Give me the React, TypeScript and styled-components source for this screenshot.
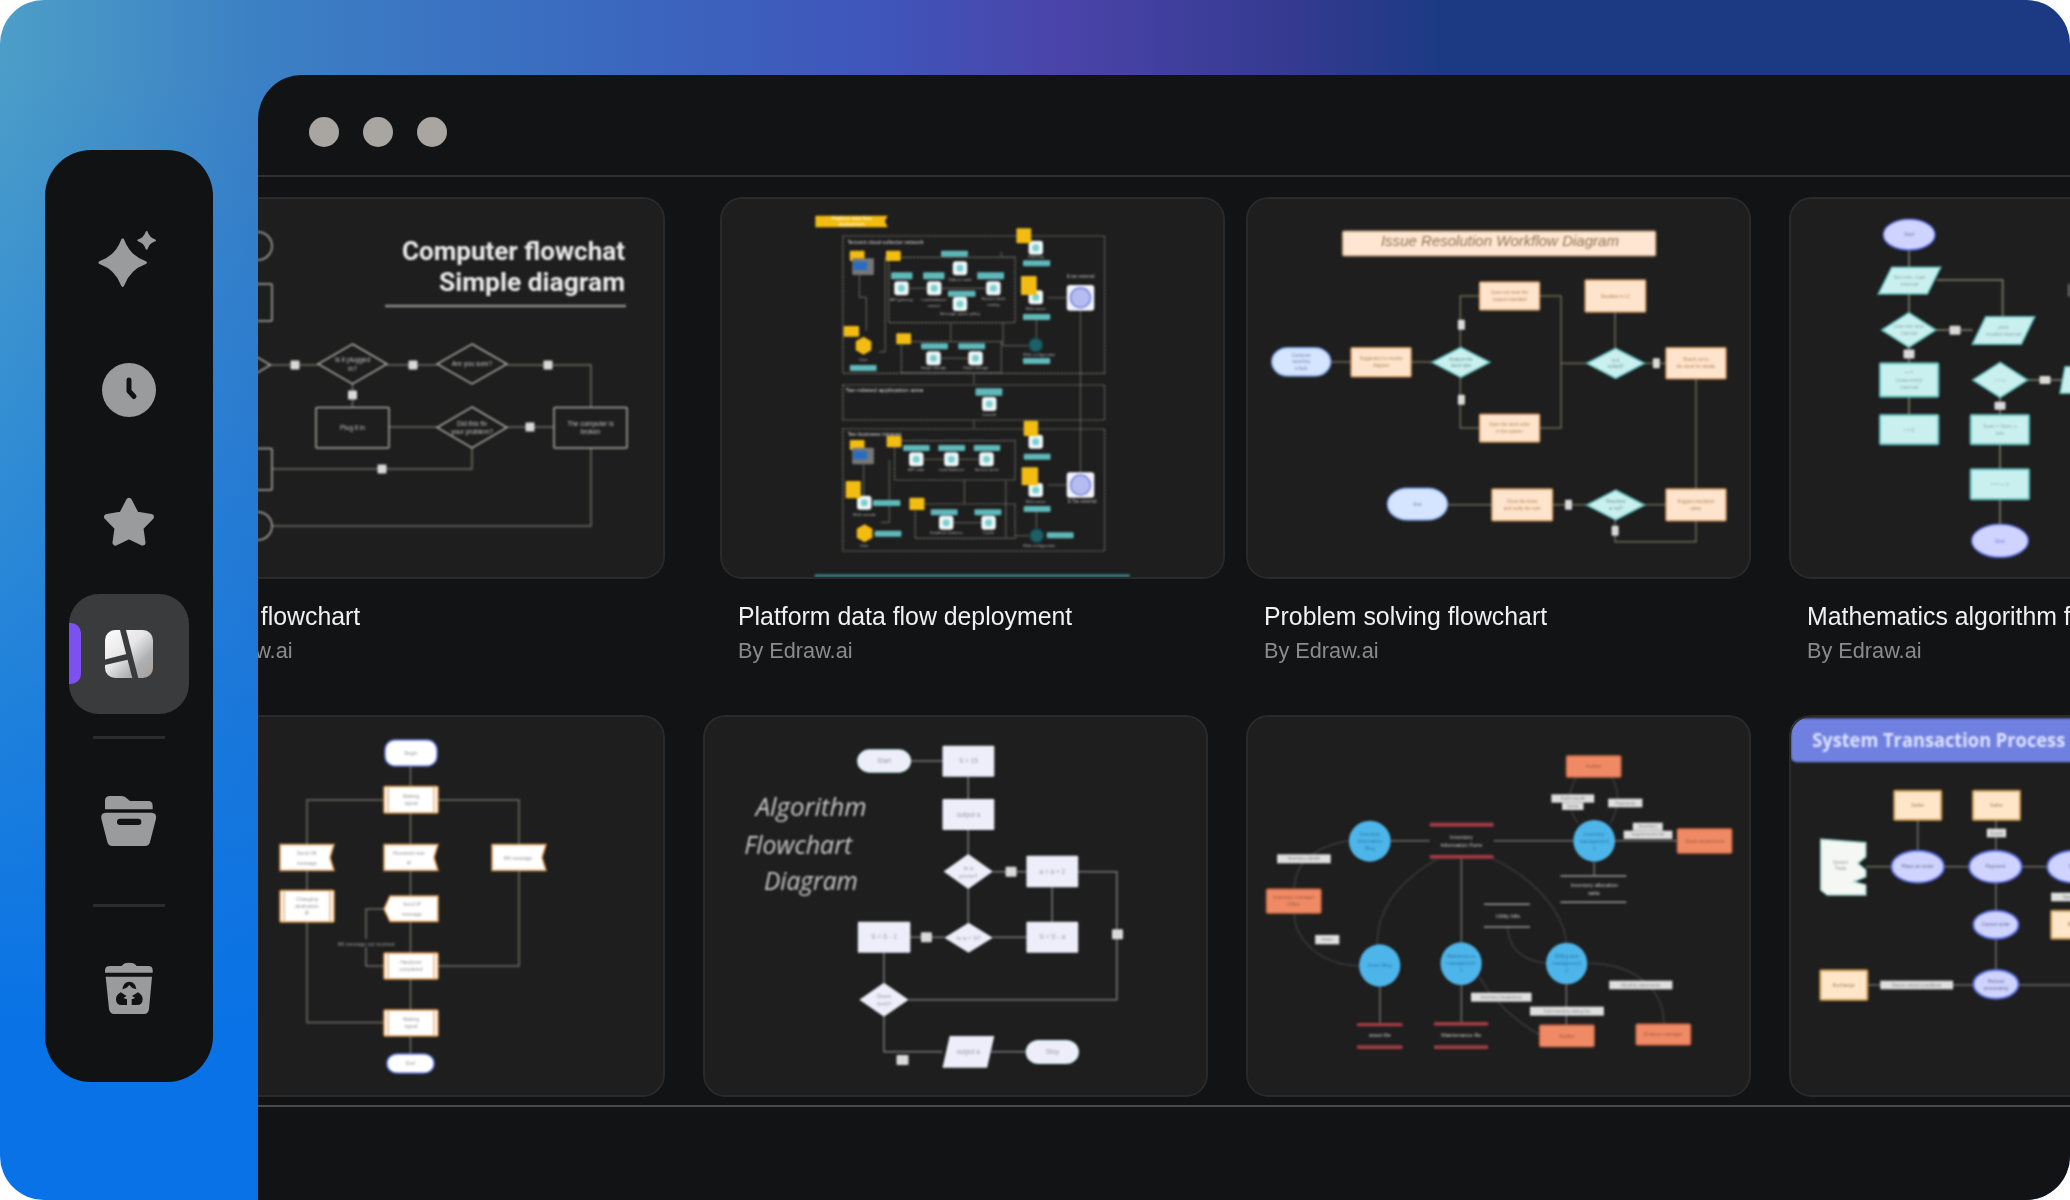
import React from "react";
import styled, { createGlobalStyle } from "styled-components";

const GlobalStyle = createGlobalStyle`
  html, body { margin: 0; padding: 0; background: #fff; }
  body { font-family: "Liberation Sans", Arial, sans-serif; }
`;

/* ---------- page frame ---------- */

const Frame = styled.div`
  width: 2070px;
  height: 1200px;
  display: flex;
  align-items: flex-start;
  gap: 45px;
  padding-left: 45px;
  box-sizing: border-box;
  border-radius: 44px;
  overflow: hidden;
  background:
    linear-gradient(180deg, rgba(8, 114, 230, 0) 70px, rgba(8, 114, 230, 1) 1040px),
    linear-gradient(90deg, #4c9ec8 0, #3c80c4 260px, #3a6cc0 560px, #3f55ba 880px, #4a44aa 1060px, #353a90 1290px, #1c3a84 1440px, #1c3a84 100%);
`;

const Sidebar = styled.nav`
  flex: 0 0 168px;
  margin-top: 150px;
  padding: 48px 24px 32px;
  box-sizing: border-box;
  display: flex;
  flex-direction: column;
  gap: 12px;
  border-radius: 46px;
  background: #111214;
`;

const NavItem = styled.div<{ $active?: boolean }>`
  position: relative;
  height: 120px;
  display: flex;
  align-items: center;
  justify-content: center;
  border-radius: 30px;
  overflow: hidden;
  background: ${(p) => (p.$active ? "#3a3b3d" : "transparent")};
`;

const ActiveMark = styled.span`
  position: absolute;
  left: 0;
  top: 29px;
  width: 12px;
  height: 61px;
  border-radius: 0 10px 10px 0;
  background: #7d50f2;
`;

const NavRule = styled.div`
  height: 3px;
  margin: 10px 24px 11px;
  background: #2b2c2d;
`;

const Window = styled.main`
  flex: 1;
  min-width: 0;
  height: 1125px;
  margin-top: 75px;
  display: flex;
  flex-direction: column;
  border-radius: 44px 0 0 0;
  overflow: hidden;
  background: #121314;
`;

const TitleBar = styled.header`
  flex: 0 0 102px;
  box-sizing: border-box;
  display: flex;
  align-items: center;
  gap: 24px;
  padding: 0 0 0 51px;
  border-bottom: 2px solid #2f3030;
`;

const Dot = styled.span`
  width: 30px;
  height: 30px;
  margin-top: 14px;
  border-radius: 50%;
  background: #a9a5a1;
`;

const Gallery = styled.section`
  flex: 1;
  min-height: 0;
  padding-top: 20px;
  overflow: hidden;
`;

const Row = styled.div`
  display: flex;
  height: 518px;
  margin-left: -98px;
`;

const Footer = styled.footer`
  flex: 0 0 95px;
  box-sizing: border-box;
  border-top: 2px solid #4b4b49;
`;

const Column = styled.article<{ $gap?: number; $inset?: number }>`
  flex: 0 0 505px;
  margin-left: ${(p) => p.$gap ?? 0}px;
  --inset: ${(p) => p.$inset ?? 18}px;
`;

const Thumb = styled.div`
  position: relative;
  height: 382px;
  border-radius: 22px;
  overflow: hidden;
  background: #1e1e1e;
  &::after {
    content: "";
    position: absolute;
    inset: 0;
    border-radius: 22px;
    border: 2px solid #2a2a2a;
    pointer-events: none;
  }
`;

const SketchSvg = styled.svg`
  display: block;
  filter: blur(0.85px);
`;

const CardTitle = styled.h3`
  margin: 24px 0 0;
  padding-left: var(--inset);
  font: 400 24.85px/28px "Liberation Sans", Arial, sans-serif;
  color: #f1f1f1;
  white-space: nowrap;
  filter: blur(0.3px);
`;

const CardBy = styled.p`
  margin: 8px 0 0;
  padding-left: var(--inset);
  font: 400 21.7px/24px "Liberation Sans", Arial, sans-serif;
  color: #8b8b8b;
  white-space: nowrap;
  filter: blur(0.3px);
`;

/* ---------- sidebar icons ---------- */

const ICON = "#9a9b9d";
const HOLE = "#111214";

const IconSvg = styled.svg`
  display: block;
  width: 100px;
  height: 100px;
`;

const SparkleIcon = () => (
  <IconSvg viewBox="-3 -36 300 300">
    <path
      d="M128 60Q146 110 196 128Q146 146 128 196Q110 146 60 128Q110 110 128 60Z"
      fill={ICON}
      stroke={ICON}
      strokeWidth="9"
      strokeLinejoin="round"
    />
    <path
      d="M200 36Q206 55 225 61Q206 67 200 86Q194 67 175 61Q194 55 200 36Z"
      fill={ICON}
      stroke={ICON}
      strokeWidth="6"
      strokeLinejoin="round"
    />
  </IconSvg>
);

const ClockIcon = () => (
  <svg width="54" height="54" viewBox="0 0 54 54">
    <circle cx="27" cy="27" r="27" fill={ICON} />
    <path d="M27 17V28L32 33.5" fill="none" stroke={HOLE} strokeWidth="5" strokeLinecap="round" strokeLinejoin="round" />
  </svg>
);

const StarIcon = () => (
  <svg width="60" height="60" viewBox="0 0 60 60">
    <path
      d="M30 9L37 22.5L51.9 24.9L41.4 35.7L43.5 50.6L30 44L16.5 50.6L18.6 35.7L8.1 24.9L23 22.5Z"
      fill={ICON}
      stroke={ICON}
      strokeWidth="6"
      strokeLinejoin="round"
    />
  </svg>
);

const LogoIcon = () => (
  <svg width="48" height="48" viewBox="0 0 48 48">
    <defs>
      <linearGradient id="logoFill" x1="0" y1="0" x2="1" y2="1">
        <stop offset="0" stopColor="#ffffff" />
        <stop offset="0.45" stopColor="#e6e4e4" />
        <stop offset="0.72" stopColor="#adb0b2" />
        <stop offset="1" stopColor="#a89e98" />
      </linearGradient>
    </defs>
    <rect width="48" height="48" rx="10" fill="url(#logoFill)" />
    <path d="M15 0H21L33.3 48H27.3Z" fill="#3a3b3d" />
    <path d="M0 29.4L24.5 23.3L26 29L0 35Z" fill="#3a3b3d" />
  </svg>
);

const FolderIcon = () => (
  <IconSvg viewBox="-3 -24 300 300">
    <path d="M75 88V62Q75 48 90 48H125Q135 48 142 56L150 63H205Q218 63 218 78V88Z" fill={ICON} />
    <path d="M78 98H214Q231 98 228 116L210 186Q207 198 195 198H97Q85 198 82 186L64 116Q61 98 78 98Z" fill={ICON} />
    <rect x="111" y="116" width="73" height="19" rx="9" fill={HOLE} />
  </IconSvg>
);

const BinIcon = () => (
  <IconSvg viewBox="-3 -15 300 300">
    <path d="M90 63H125Q130 53 147 53Q165 53 170 63H205Q218 63 218 76V83H75V76Q75 63 90 63Z" fill={ICON} />
    <path d="M77 95H216L207 192Q205 207 192 207H102Q90 207 87 192Z" fill={ICON} />
    <path d="M127 133Q130 110 148 110Q166 110 169 133L157 129L148 120L139 129Z" fill={HOLE} />
    <path d="M122 142L140 153L130 159L141 163V180H125Q108 180 108 162Q108 150 122 142Z" fill={HOLE} />
    <path d="M174 142L156 153L166 159L155 163V180H171Q188 180 188 162Q188 150 174 142Z" fill={HOLE} />
  </IconSvg>
);

/* ---------- thumbnails: shapes are noted in the crop's units and mapped to the page ---------- */

type Box = [number, number, number, number];
type Map = { ox: number; oy: number; sx: number; sy: number };

type Shape =
  | { kind: "box" | "oval" | "diamond"; b: Box; fill: string; stroke?: string; sw?: number; rx?: number; dash?: string; text?: string[]; size?: number; color?: string }
  | { kind: "para"; b: Box; skew: number; fill: string; stroke?: string; text?: string[]; size?: number; color?: string }
  | { kind: "poly"; pts: number[]; fill: string; stroke?: string }
  | { kind: "line"; pts: number[]; stroke?: string; sw?: number; dash?: string }
  | { kind: "curve"; pts: number[]; stroke?: string; sw?: number }
  | { kind: "hexa"; x: number; y: number; r: number; fill: string }
  | { kind: "circle"; x: number; y: number; r: number; fill: string; stroke?: string; sw?: number }
  | { kind: "text"; x: number; y: number; t: string; size?: number; color?: string; anchor?: "start" | "middle" | "end"; family?: string; weight?: number; italic?: boolean; fit?: number };

const LINE = "#6c6c66";

const renderShape = (s: Shape, i: number, m: Map) => {
  const X = (v: number) => m.ox + v / m.sx;
  const Y = (v: number) => m.oy + v / m.sy;
  const label = (cx: number, cy: number, lines?: string[], size = 6, color = "#777") =>
    lines?.map((line, n) => (
      <text
        key={n}
        x={cx}
        y={cy + (n - (lines.length - 1) / 2) * (size + 2) + size * 0.35}
        fontSize={size}
        fill={color}
        textAnchor="middle"
        fontFamily="Liberation Sans, sans-serif"
      >
        {line}
      </text>
    ));

  switch (s.kind) {
    case "box":
    case "oval":
    case "diamond": {
      const [x1, y1, x2, y2] = [X(s.b[0]), Y(s.b[1]), X(s.b[2]), Y(s.b[3])];
      const cx = (x1 + x2) / 2;
      const cy = (y1 + y2) / 2;
      const common = { fill: s.fill, stroke: s.stroke, strokeWidth: s.sw ?? 1.5 };
      return (
        <g key={i}>
          {s.kind === "box" && <rect x={x1} y={y1} width={x2 - x1} height={y2 - y1} rx={s.rx ?? 1} strokeDasharray={s.dash} {...common} />}
          {s.kind === "oval" && <ellipse cx={cx} cy={cy} rx={(x2 - x1) / 2} ry={(y2 - y1) / 2} {...common} />}
          {s.kind === "diamond" && <polygon points={`${cx},${y1} ${x2},${cy} ${cx},${y2} ${x1},${cy}`} {...common} />}
          {label(cx, cy, s.text, s.size, s.color)}
        </g>
      );
    }
    case "para": {
      const [x1, y1, x2, y2] = [X(s.b[0]), Y(s.b[1]), X(s.b[2]), Y(s.b[3])];
      const k = s.skew / m.sx;
      return (
        <g key={i}>
          <polygon points={`${x1 + k},${y1} ${x2},${y1} ${x2 - k},${y2} ${x1},${y2}`} fill={s.fill} stroke={s.stroke} strokeWidth="1.5" />
          {label((x1 + x2) / 2, (y1 + y2) / 2, s.text, s.size, s.color)}
        </g>
      );
    }
    case "poly": {
      const pts = s.pts.reduce<string[]>((acc, v, n) => (n % 2 ? acc : [...acc, `${X(v)},${Y(s.pts[n + 1])}`]), []);
      return <polygon key={i} points={pts.join(" ")} fill={s.fill} stroke={s.stroke} strokeWidth="1.5" />;
    }
    case "line": {
      const pts = s.pts.reduce<string[]>((acc, v, n) => (n % 2 ? acc : [...acc, `${X(v)},${Y(s.pts[n + 1])}`]), []);
      return <polyline key={i} points={pts.join(" ")} fill="none" stroke={s.stroke ?? LINE} strokeWidth={s.sw ?? 1.5} strokeDasharray={s.dash} />;
    }
    case "curve": {
      const p = s.pts;
      const d = `M${X(p[0])} ${Y(p[1])}C${X(p[2])} ${Y(p[3])} ${X(p[4])} ${Y(p[5])} ${X(p[6])} ${Y(p[7])}`;
      return <path key={i} d={d} fill="none" stroke={s.stroke ?? "#3c3c3c"} strokeWidth={s.sw ?? 1.5} />;
    }
    case "hexa": {
      const cx = X(s.x);
      const cy = Y(s.y);
      const r = s.r;
      const pts = [0, 1, 2, 3, 4, 5].map((n) => {
        const a = (Math.PI / 3) * n - Math.PI / 2;
        return `${cx + r * Math.cos(a)},${cy + r * Math.sin(a)}`;
      });
      return <polygon key={i} points={pts.join(" ")} fill={s.fill} />;
    }
    case "circle":
      return <circle key={i} cx={X(s.x)} cy={Y(s.y)} r={s.r} fill={s.fill} stroke={s.stroke} strokeWidth={s.sw ?? 1.5} />;
    case "text":
      return (
        <text
          key={i}
          x={X(s.x)}
          y={Y(s.y)}
          fontSize={s.size ?? 6}
          fill={s.color ?? "#c8c8c8"}
          textAnchor={s.anchor ?? "middle"}
          fontFamily={s.family ?? "Liberation Sans, sans-serif"}
          fontWeight={s.weight ?? 400}
          fontStyle={s.italic ? "italic" : "normal"}
          textLength={s.fit}
          lengthAdjust={s.fit ? "spacingAndGlyphs" : undefined}
        >
          {s.t}
        </text>
      );
  }
};

// draws in page coordinates, the viewBox is the card's place on the page
const Sketch: React.FC<{ left: number; top: number; map: Map; shapes: Shape[] }> = ({ left, top, map, shapes }) => (
  <SketchSvg width="505" height="382" viewBox={`${left} ${top} 505 382`}>
    {shapes.map((s, i) => renderShape(s, i, map))}
  </SketchSvg>
);

const box = (b: Box, fill: string, stroke?: string, text?: string[], extra?: object): Shape => ({ kind: "box", b, fill, stroke, text, ...extra });
const oval = (b: Box, fill: string, stroke?: string, text?: string[], extra?: object): Shape => ({ kind: "oval", b, fill, stroke, text, ...extra });
const diamond = (b: Box, fill: string, stroke?: string, text?: string[], extra?: object): Shape => ({ kind: "diamond", b, fill, stroke, text, ...extra });
const line = (...pts: number[]): Shape => ({ kind: "line", pts });
const curve = (...pts: number[]): Shape => ({ kind: "curve", pts });
const chip = (x: number, y: number, w: number, h: number, ratioX = 1, ratioY = 1): Shape => ({
  kind: "box",
  b: [x - (w / 2) * ratioX, y - (h / 2) * ratioY, x + (w / 2) * ratioX, y + (h / 2) * ratioY],
  fill: "#d9d9d9",
});

/* Computer flowchart, page coordinates */
const PAGE: Map = { ox: 0, oy: 0, sx: 1, sy: 1 };
const OUTLINE = { fill: "none", stroke: "#a9a9a4", color: "#c4c4c4", sw: 1.5 };
const outlined = (k: "box" | "oval" | "diamond", b: Box, text?: string[]): Shape => ({ kind: k, b, text, size: 6.5, ...OUTLINE });

const computerChart: Shape[] = [
  { kind: "text", x: 625, y: 260, t: "Computer flowchat", size: 25, color: "#ececec", anchor: "end", family: "Roboto, sans-serif", weight: 700, fit: 223 },
  { kind: "text", x: 625, y: 291, t: "Simple diagram", size: 25, color: "#ececec", anchor: "end", family: "Roboto, sans-serif", weight: 700, fit: 186 },
  { kind: "line", pts: [385, 306, 626, 306], stroke: "#8d8d88", sw: 2.5 },
  line(270, 365, 318, 365),
  line(387, 365, 437, 365),
  line(507, 365, 591, 365, 591, 407),
  line(352.5, 384, 352.5, 407),
  line(389, 427, 437, 427),
  line(507, 427, 554, 427),
  line(472, 448, 472, 469, 272, 469),
  line(272, 526, 591, 526, 591, 448),
  outlined("oval", [244, 232, 272, 260]),
  outlined("box", [200, 284, 272, 321]),
  outlined("diamond", [200, 344, 270.5, 386]),
  outlined("diamond", [318, 344, 387, 384], ["Is it plugged", "in?"]),
  outlined("diamond", [437, 344, 507, 384], ["Are you sure?"]),
  outlined("diamond", [437, 407, 507, 448], ["Did this fix", "your problem?"]),
  outlined("box", [316, 407.5, 389, 448], ["Plug it in"]),
  outlined("box", [554, 407.5, 627, 448], ["The computer is", "broken"]),
  outlined("box", [200, 448.5, 272, 490]),
  outlined("oval", [244, 512, 272, 540]),
  chip(295, 365, 9, 9),
  chip(413, 365, 9, 9),
  chip(548, 365, 9, 9),
  chip(352.5, 395, 9, 9),
  chip(530, 427, 9, 9),
  chip(382, 469, 9, 9),
];

/* Platform data flow deployment, crop units */
const YELLOW = "#f2bc12";
const TEAL = "#5fb9ba";
const SQUARE = "#eef7f7";

const tealChips: Box[] = [
  [700, 212, 778, 230], [555, 277, 617, 298], [648, 277, 710, 298], [805, 277, 883, 298], [720, 332, 800, 350],
  [642, 490, 720, 508], [750, 490, 828, 508], [938, 241, 1017, 259], [938, 402, 1017, 420], [938, 534, 1017, 552],
  [435, 555, 513, 573], [800, 625, 878, 647], [590, 795, 667, 813], [692, 795, 770, 813], [795, 795, 872, 813],
  [940, 821, 1018, 839], [502, 960, 582, 978], [670, 988, 748, 1006], [797, 988, 875, 1006], [940, 978, 1018, 996],
  [507, 1052, 585, 1070], [1007, 1057, 1085, 1075],
];
const iconSquares: [number, number][] = [
  [975, 203], [585, 325], [680, 325], [755, 265], [852, 325], [755, 372], [975, 352], [678, 535], [800, 535],
  [840, 672], [975, 785], [628, 838], [730, 838], [832, 838], [477, 968], [975, 930], [715, 1028], [838, 1028],
];
const iconCaptions: [number, number, string][] = [
  [975, 235, "Gateway"], [585, 362, "API gateway"], [680, 362, "Load balancer"], [680, 380, "service"], [755, 302, "Sidecar node"],
  [852, 360, "Service mesh"], [852, 378, "routing"], [755, 404, "Message queue policy"], [975, 390, "Web server"], [678, 568, "Image storage"],
  [800, 568, "Object storage"], [840, 708, "Console"], [628, 872, "API node"], [730, 872, "Load balancer"], [832, 872, "Service mesh"],
  [477, 1008, "Web console"], [975, 968, "Web server"], [715, 1062, "Database instance"], [838, 1062, "Cache"],
  [985, 528, "Web configuration"], [985, 1100, "Web configuration"], [475, 542, "User"], [477, 1102, "User"],
];
const yellowTags: Box[] = [
  [435, 212, 478, 243], [540, 212, 583, 243], [919, 145, 962, 190], [932, 288, 978, 345], [417, 438, 462, 470],
  [570, 460, 613, 493], [435, 780, 478, 810], [542, 768, 585, 802], [940, 722, 982, 768], [934, 862, 982, 916],
  [423, 903, 467, 955], [608, 953, 652, 990],
];
const dashed = (b: Box): Shape => ({ kind: "box", b, fill: "none", stroke: "#85857c", sw: 1.2, rx: 0, dash: "2 1.5" });
const dashLine = (...pts: number[]): Shape => ({ kind: "line", pts, stroke: "#5c5c56", sw: 1.2 });

const platformChart: Shape[] = [
  ...([[415, 168, 1175, 580], [415, 615, 1175, 720], [415, 747, 1175, 1113], [548, 232, 915, 428], [585, 485, 875, 578], [565, 782, 915, 900], [625, 972, 915, 1075]] as Box[]).map(dashed),
  dashLine(463, 285, 463, 352, 483, 352, 483, 452),
  dashLine(520, 515, 538, 515, 538, 232, 548, 232),
  dashLine(605, 325, 660, 325),
  dashLine(700, 325, 830, 325),
  dashLine(728, 428, 728, 485),
  dashLine(880, 428, 880, 497, 955, 497),
  dashLine(977, 420, 977, 475),
  dashLine(1010, 353, 1065, 353),
  dashLine(1105, 392, 1105, 877),
  dashLine(795, 580, 795, 615),
  dashLine(795, 720, 795, 747),
  dashLine(698, 535, 780, 535),
  dashLine(650, 838, 710, 838),
  dashLine(750, 838, 812, 838),
  dashLine(475, 853, 475, 950),
  dashLine(550, 840, 550, 1027, 525, 1027),
  dashLine(768, 900, 768, 972),
  dashLine(888, 900, 888, 1072),
  dashLine(1010, 915, 1065, 915),
  dashLine(977, 996, 977, 1045),
  dashLine(915, 1067, 955, 1067),
  dashLine(735, 1028, 818, 1028),
  dashLine(875, 215, 875, 232, 915, 232),
  { kind: "poly", pts: [335, 107, 545, 107, 537, 124, 545, 142, 335, 142], fill: YELLOW },
  { kind: "text", x: 440, y: 120, t: "Platform data flow", size: 5, color: "#fff" },
  { kind: "text", x: 440, y: 137, t: "deployment", size: 5, color: "#fff" },
  { kind: "text", x: 428, y: 193, t: "Tencent cloud collector network", size: 6, color: "#ddd", anchor: "start", fit: 76 },
  { kind: "text", x: 422, y: 637, t: "Tax-related application area", size: 6, color: "#ddd", anchor: "start", fit: 78 },
  { kind: "text", x: 428, y: 767, t: "Tax business intranet", size: 6, color: "#ddd", anchor: "start", fit: 54 },
  ...tealChips.map((b) => box(b, TEAL)),
  ...iconSquares.map(([x, y]) => box([x - 21, y - 21, x + 21, y + 21], SQUARE, undefined, undefined, { rx: 3 })),
  ...iconSquares.map(([x, y]): Shape => ({ kind: "circle", x, y, r: 3.5, fill: "#7dcfd0" })),
  ...iconCaptions.map(([x, y, t]): Shape => ({ kind: "text", x, y, t, size: 4, color: "#b4b4b4" })),
  ...yellowTags.map((b) => box(b, YELLOW)),
  box([442, 235, 505, 285], "#77777a"),
  box([445, 245, 485, 270], "#2a6cc0"),
  box([442, 803, 505, 853], "#77777a"),
  box([445, 812, 485, 838], "#2a6cc0"),
  { kind: "hexa", x: 475, y: 497, r: 9, fill: YELLOW },
  { kind: "hexa", x: 478, y: 1060, r: 9, fill: YELLOW },
  { kind: "circle", x: 975, y: 495, r: 7, fill: "#1f5f66", stroke: "#123c40" },
  { kind: "circle", x: 978, y: 1067, r: 7, fill: "#1f5f66", stroke: "#123c40" },
  box([1065, 315, 1145, 392], "#f4f4fb", undefined, undefined, { rx: 3 }),
  box([1065, 877, 1145, 953], "#f4f4fb", undefined, undefined, { rx: 3 }),
  { kind: "circle", x: 1105, y: 353, r: 10, fill: "#b4bcf0", stroke: "#7a86e0" },
  { kind: "circle", x: 1105, y: 915, r: 10, fill: "#b4bcf0", stroke: "#7a86e0" },
  { kind: "text", x: 1105, y: 295, t: "E-tax external", size: 4.5, color: "#bbb" },
  { kind: "text", x: 1110, y: 970, t: "E-Tax external", size: 4.5, color: "#bbb" },
  { kind: "line", pts: [333, 1187, 1248, 1187], stroke: "#3d8a8e", sw: 2.5 },
];

/* Problem solving flowchart */
const PEACH = "#ffe4cd";
const PEACH_EDGE = "#d29a60";
const MINT = "#c9f0ef";
const MINT_EDGE = "#62bfbd";
const peach = (b: Box, text?: string[]) => box(b, PEACH, PEACH_EDGE, text, { size: 4.5, color: "#b08a58" });

const problemChart: Shape[] = [
  ...[
    [188, 546, 226, 546], [338, 546, 377, 546], [430, 502, 430, 348, 466, 348], [430, 592, 430, 744, 466, 744],
    [578, 348, 618, 348, 618, 744, 578, 744], [618, 550, 666, 550], [719, 396, 719, 505], [774, 550, 814, 550],
    [870, 596, 870, 927], [814, 974, 774, 974], [666, 974, 602, 974], [489, 974, 406, 974],
    [719, 1020, 719, 1085, 870, 1085, 870, 1022],
  ].map((pts) => ({ kind: "line" as const, pts, stroke: "#6a6a55" })),
  box([210, 153, 795, 228], "#ffe6d2", "#a98a6a", undefined, { rx: 2 }),
  { kind: "text", x: 504, y: 198, t: "Issue Resolution Workflow Diagram", size: 14, color: "#8e7350", italic: true, fit: 238 },
  peach([226, 503, 338, 590], ["Suggestion to resolve", "diagram"]),
  peach([466, 306, 578, 390], ["Does not meet the", "support standard"]),
  peach([663, 300, 776, 396], ["Escalate to L2"]),
  peach([814, 503, 926, 596], ["Reach out to", "the client for details"]),
  peach([466, 703, 578, 786], ["Open the work order", "in the system"]),
  peach([814, 927, 926, 1022], ["Suggest resolution", "steps"]),
  peach([489, 927, 602, 1022], ["Close the ticket", "and notify the user"]),
  box([78, 503, 188, 588], "#d5e4ff", "#7ea4e8", ["Customer", "reporting", "a fault"], { rx: 16, size: 4.5, color: "#7a88a8" }),
  box([294, 925, 406, 1020], "#d5e4ff", "#7ea4e8", ["End"], { rx: 20, size: 4.5, color: "#7a88a8" }),
  diamond([377, 502, 485, 592], MINT, MINT_EDGE, ["Analyze the", "issue type"], { size: 4.5, color: "#6f8f8f" }),
  diamond([666, 505, 774, 595], MINT, MINT_EDGE, ["Is it", "solved?"], { size: 4.5, color: "#6f8f8f" }),
  diamond([666, 930, 774, 1020], MINT, MINT_EDGE, ["Resolved", "or not?"], { size: 4.5, color: "#6f8f8f" }),
  chip(432, 434, 7, 10, 1.867, 3),
  chip(432, 659, 7, 10, 1.867, 3),
  chip(796, 550, 7, 10, 1.867, 3),
  chip(632, 974, 7, 10, 1.867, 3),
  chip(719, 1052, 7, 10, 1.867, 3),
];

/* Mathematics algorithm flowchart */
const CIRCLE = "#cfd3ff";
const CIRCLE_EDGE = "#5a6de0";
const mint = (b: Box, text?: string[]) => box(b, MINT, MINT_EDGE, text, { size: 5.5, color: "#8fa7a7", sw: 2 });
const para = (b: Box, text?: string[]): Shape => ({ kind: "para", b, skew: 40, fill: MINT, stroke: MINT_EDGE, text, size: 5.5, color: "#8fa7a7" });

const mathChart: Shape[] = [
  ...[
    [387, 210, 387, 262], [387, 342, 387, 398], [470, 300, 668, 300, 668, 410], [468, 450, 578, 450], [387, 502, 387, 550],
    [387, 650, 387, 705], [743, 600, 860, 600], [660, 653, 660, 705], [660, 793, 660, 868], [660, 958, 660, 1033],
  ].map((pts) => ({ kind: "line" as const, pts, stroke: "#6a6a5a", sw: 2 })),
  oval([310, 118, 465, 210], CIRCLE, CIRCLE_EDGE, ["Start"], { size: 5, color: "#7c7f9a" }),
  para([295, 262, 482, 342], ["Set min, max", "interval"]),
  diamond([305, 398, 468, 502], MINT, MINT_EDGE, ["max-min less", "interval"], { size: 5, color: "#8fa7a7" }),
  para([577, 410, 764, 493], ["print", "invalid interval"]),
  mint([300, 550, 475, 650], ["n =", "(max-min)/", "interval"]),
  mint([300, 705, 475, 793], ["i = 0"]),
  diamond([578, 547, 743, 653], MINT, MINT_EDGE, ["i < n"], { size: 5, color: "#8fa7a7" }),
  mint([572, 705, 747, 793], ["Sum = Sum +", "min"]),
  mint([572, 868, 747, 958], ["i = i + 1"]),
  oval([575, 1033, 745, 1132], CIRCLE, CIRCLE_EDGE, ["End"], { size: 5, color: "#6f78d8" }),
  { kind: "para", b: [840, 560, 900, 640], skew: 15, fill: MINT, stroke: MINT_EDGE },
  chip(525, 451, 11, 9, 3, 3),
  chip(387, 522, 11, 9, 3, 3),
  chip(795, 600, 11, 8, 3, 3),
  chip(660, 677, 11, 8, 3, 3),
  { kind: "line", pts: [867, 312, 867, 350], stroke: "#c8c8c8", sw: 1 },
];

/* Simple flowchart, second row */
const banner = (x: number, y: number): Shape => ({
  kind: "poly",
  pts: [x, y, x + 54, y, x + 50, y + 13, x + 54, y + 26, x, y + 26],
  fill: "#fff",
  stroke: "#e09a50",
});
const station = (x: number, y: number, h: number, text: string[]): Shape[] => [
  box([x, y, x + 54, y + h], "#fff", "#e09a50", text, { size: 5, color: "#999" }),
  { kind: "line", pts: [x + 4, y, x + 4, y + h], stroke: "#e9b27c", sw: 1.5 },
  { kind: "line", pts: [x + 50, y, x + 50, y + h], stroke: "#e9b27c", sw: 1.5 },
];
const pill = (b: Box, t: string): Shape => box(b, "#fff", "#6a80e0", [t], { rx: 10, size: 5, color: "#999" });
const caption = (x: number, y: number, t: string, size = 5): Shape => ({ kind: "text", x, y, t, size, color: "#999" });

const routerChart: Shape[] = [
  line(410.5, 766, 410.5, 1054),
  line(307, 845, 307, 800, 519, 800, 519, 845),
  line(307, 871, 307, 891),
  line(307, 922, 307, 1022.5, 384, 1022.5),
  line(519, 871, 519, 966, 437.5, 966),
  line(384, 909, 366, 909, 366, 966, 384, 966),
  pill([385, 740, 437, 766], "Begin"),
  ...station(384, 786.5, 26.5, ["Waiting", "signal"]),
  banner(280, 844.5),
  caption(307, 855, "Send OK"),
  caption(307, 865, "message"),
  banner(384, 844.5),
  caption(409, 855, "Received new"),
  caption(409, 865, "IP"),
  banner(492, 844.5),
  caption(518, 860, "IMI message"),
  ...station(280, 890.6, 31.4, ["Changing", "destination", "IP"]),
  { kind: "poly", pts: [390, 896, 438, 896, 438, 921.6, 390, 921.6, 384, 909], fill: "#fff", stroke: "#e09a50" },
  caption(412, 906, "Send IP"),
  caption(412, 916, "message"),
  ...station(384, 953, 26, ["Handover", "completed"]),
  ...station(384, 1010, 26, ["Waiting", "signal"]),
  pill([387, 1054, 434, 1073], "End"),
  { kind: "box", b: [330, 939, 402, 947], fill: "#1e1e1e" },
  caption(366, 945.5, "IMI message not received"),
];

/* Algorithm flowchart diagram */
const LAV = "#eeeefa";
const lav = (b: Box, text: string[]) => box(b, LAV, undefined, text, { size: 6.5, color: "#9a9aa4" });
const algoTitle = (x: number, y: number, t: string, fit: number): Shape => ({
  kind: "text", x, y, t, size: 25, color: "#c9c9c9", anchor: "start", family: "Open Sans, sans-serif", italic: true, fit,
});

const algorithmChart: Shape[] = [
  algoTitle(212, 347, "Algorithm", 111),
  algoTitle(180, 462, "Flowchart", 108),
  algoTitle(235, 570, "Diagram", 94),
  ...[
    [645, 183, 735, 183], [807, 230, 807, 297], [807, 390, 807, 462], [876, 515, 970, 515], [1042, 665, 1042, 562],
    [807, 567, 807, 668], [876, 712, 970, 712], [740, 712, 645, 712], [571, 758, 571, 848],
    [640, 899, 1223, 899, 1223, 515, 1115, 515], [571, 950, 571, 1055, 735, 1055], [870, 1055, 970, 1055],
  ].map((pts) => ({ kind: "line" as const, pts, stroke: "#77777a" })),
  box([498, 150, 645, 216], LAV, "#d8f4f4", ["Start"], { rx: 12, size: 6.5, color: "#9a9aa4" }),
  lav([735, 137, 880, 230], ["S = 15"]),
  lav([735, 297, 880, 390], ["output a"]),
  diamond([738, 462, 876, 567], LAV, undefined, ["Is a", "prime?"], { size: 6, color: "#9a9aa4" }),
  lav([970, 467, 1115, 562], ["a = a + 2"]),
  diamond([740, 668, 876, 758], LAV, undefined, ["Is a < S?"], { size: 6, color: "#9a9aa4" }),
  lav([498, 665, 645, 758], ["S = S - 1"]),
  lav([970, 665, 1115, 758], ["S = S - a"]),
  diamond([502, 848, 640, 950], LAV, undefined, ["Does", "S=0?"], { size: 6, color: "#9a9aa4" }),
  { kind: "poly", pts: [735, 1103, 755, 1008, 880, 1008, 860, 1103], fill: LAV },
  { kind: "text", x: 807, y: 1062, t: "output a", size: 6.5, color: "#9a9aa4" },
  box([970, 1022, 1115, 1090], LAV, "#d8f4f4", ["Stop"], { rx: 12, size: 6.5, color: "#9a9aa4" }),
  chip(927, 515, 11, 10, 2.8, 3),
  chip(690, 712, 11, 10, 2.8, 3),
  chip(1225, 703, 11, 10, 2.8, 3),
  chip(623, 1080, 12, 10, 2.8, 3),
];

/* Inventory data flow */
const SKY = "#4db5ea";
const CORAL = "#f08a65";
const CORAL_EDGE = "#b5603f";
const BAR = "#a33b46";
const sky = (b: Box, text?: string[]) => oval(b, SKY, undefined, text, { size: 5, color: "#2c7ba8" });
const coral = (b: Box, text?: string[]) => box(b, CORAL, CORAL_EDGE, text, { size: 5, color: "#a35a3e", rx: 2 });
const tag = (b: Box, text: string[]) => box(b, "#dfdfdf", undefined, text, { size: 4.5, color: "#8a8a8a", rx: 0 });
const arrow = (x1: number, x2: number, y: number): Shape => ({ kind: "line", pts: [x1, y, x2, y], stroke: "#9b9b9b", sw: 1.5 });

const inventoryChart: Shape[] = [
  line(300, 422, 373, 422),
  line(492, 422, 641, 422),
  line(432, 476, 432, 727),
  line(719, 422, 835, 422),
  line(680, 485, 680, 528),
  line(280, 860, 280, 969),
  line(432, 855, 432, 966),
  line(628, 853, 628, 975),
  curve(222, 422, 150, 440, 120, 500, 120, 567),
  curve(120, 640, 120, 720, 170, 795, 241, 798),
  curve(388, 476, 310, 550, 275, 630, 275, 733),
  curve(490, 476, 560, 530, 620, 620, 628, 728),
  curve(647, 232, 630, 270, 630, 330, 650, 370),
  curve(712, 232, 730, 270, 725, 330, 710, 370),
  curve(590, 790, 540, 780, 520, 740, 518, 681),
  curve(667, 790, 750, 790, 810, 860, 810, 972),
  curve(465, 830, 490, 900, 530, 960, 578, 1005),
  sky([222, 362, 300, 485], ["Inventory", "information", "filing"]),
  sky([641, 360, 719, 485], ["Inventory", "management", "1"]),
  sky([241, 733, 318, 860], ["Asset filing"]),
  sky([393, 727, 470, 855], ["Maintenance", "management", "1"]),
  sky([590, 728, 667, 853], ["Billing and", "management", "2"]),
  coral([628, 167, 730, 232], ["Auditor"]),
  coral([835, 386, 937, 460], ["Stock department"]),
  coral([68, 567, 170, 640], ["Inventory manager", "Office"]),
  coral([578, 975, 680, 1040], ["Auditor"]),
  coral([758, 972, 860, 1035], ["Finance manager"]),
  ...([
    [373, 368, 492, 380], [373, 465, 492, 476], [237, 969, 322, 979],
    [237, 1036, 322, 1047], [381, 966, 482, 977], [381, 1036, 482, 1047],
  ] as Box[]).map((b) => box(b, BAR, undefined, undefined, { rx: 0 })),
  { kind: "text", x: 432, y: 418, t: "Inventory", size: 5.5 },
  { kind: "text", x: 432, y: 442, t: "Information Form", size: 5.5 },
  { kind: "text", x: 280, y: 1012, t: "asset file", size: 5.5 },
  { kind: "text", x: 432, y: 1012, t: "Maintenance file", size: 5.5 },
  { kind: "text", x: 680, y: 562, t: "Inventory allocation", size: 5.5 },
  { kind: "text", x: 680, y: 584, t: "table", size: 5.5 },
  { kind: "text", x: 519, y: 655, t: "Utility bills", size: 5.5 },
  arrow(617, 740, 528),
  arrow(617, 740, 607),
  arrow(474, 560, 613),
  arrow(474, 560, 681),
  tag([88, 463, 188, 490], ["Inventory details"]),
  tag([159, 705, 204, 733], ["Asset"]),
  tag([600, 283, 680, 308], ["Audit results"]),
  tag([620, 308, 660, 330], ["forms"]),
  tag([706, 296, 770, 322], ["Payments"]),
  tag([752, 368, 808, 392], ["Inventory"]),
  tag([735, 392, 826, 417], ["requirements list"]),
  tag([708, 842, 826, 868], ["Monthly statements"]),
  tag([450, 878, 563, 905], ["Inventory breakdown"]),
  tag([560, 920, 698, 947], ["Full inventory listing list"]),
];

/* System transaction process */
const SAND = "#ffe6c8";
const SAND_EDGE = "#c4964e";
const sand = (b: Box, t: string) => box(b, SAND, SAND_EDGE, [t], { size: 5, color: "#96825f", sw: 2 });
const disc = (b: Box, text: string[]) => oval(b, CIRCLE, CIRCLE_EDGE, text, { size: 5, color: "#6c7090", sw: 2 });
const slip = (b: Box, t: string) => box(b, "#dedede", undefined, [t], { size: 4.5, color: "#888", rx: 0 });

const transactionChart: Shape[] = [
  box([1047, 55, 1580, 187], "#6f80e0", undefined, undefined, { rx: 6 }),
  { kind: "text", x: 1087, y: 142, t: "System Transaction Process", size: 19, color: "#dfe3ff", anchor: "start", family: "Open Sans, sans-serif", weight: 700, fit: 253 },
  line(1187, 500, 1235, 500),
  line(1333, 500, 1380, 500),
  line(1478, 500, 1526, 500),
  line(1284, 360, 1284, 452),
  line(1430, 360, 1430, 452),
  line(1430, 548, 1430, 632),
  line(1430, 716, 1430, 810),
  line(1190, 855, 1388, 855),
  line(1472, 855, 1600, 855),
  sand([1240, 272, 1328, 360], "Seller"),
  sand([1387, 272, 1475, 360], "Seller"),
  sand([1102, 811, 1190, 900], "Exchange"),
  sand([1533, 632, 1620, 716], "Buyer"),
  disc([1235, 452, 1333, 548], ["Place an order"]),
  disc([1380, 452, 1478, 548], ["Payment"]),
  disc([1526, 452, 1624, 548], ["Ship"]),
  disc([1388, 632, 1472, 716], ["Cancel order"]),
  disc([1388, 810, 1472, 896], ["Refund", "processing"]),
  { kind: "poly", pts: [1103, 418, 1187, 428, 1187, 470, 1172, 490, 1187, 510, 1187, 530, 1165, 545, 1187, 555, 1187, 585, 1115, 585, 1103, 570], fill: "#f5f7f4", stroke: "#9fd6cf" },
  { kind: "text", x: 1140, y: 492, t: "System", size: 4.5, color: "#999" },
  { kind: "text", x: 1140, y: 510, t: "Trade", size: 4.5, color: "#999" },
  slip([1413, 386, 1449, 412], "Goods"),
  slip([1533, 578, 1600, 604], "Status"),
  slip([1214, 842, 1350, 868], "Return refund conditions"),
];

const CROP_TOP_RIGHT: Map = { ox: 1230, oy: 180, sx: 1.867, sy: 3 };
const CROP_BOTTOM_RIGHT: Map = { ox: 1230, oy: 700, sx: 1.867, sy: 3 };

const topRow = [
  { left: 160, gap: 0, title: "Simple flowchart", map: PAGE, shapes: computerChart },
  { left: 720, gap: 55, inset: 18, title: "Platform data flow deployment", map: { ox: 700, oy: 180, sx: 2.904, sy: 3 }, shapes: platformChart },
  { left: 1246, gap: 21, title: "Problem solving flowchart", map: CROP_TOP_RIGHT, shapes: problemChart },
  { left: 1789, gap: 38, title: "Mathematics algorithm flowchart", map: { ox: 1780, oy: 180, sx: 3, sy: 3 }, shapes: mathChart },
];

const bottomRow = [
  { left: 160, gap: 0, map: PAGE, shapes: routerChart },
  { left: 703, gap: 38, map: { ox: 680, oy: 700, sx: 2.8, sy: 3 }, shapes: algorithmChart },
  { left: 1246, gap: 38, map: CROP_BOTTOM_RIGHT, shapes: inventoryChart },
  { left: 1789, gap: 38, map: CROP_BOTTOM_RIGHT, shapes: transactionChart },
];

export default function App() {
  return (
    <>
      <GlobalStyle />
      <Frame>
        <Sidebar>
          <NavItem><SparkleIcon /></NavItem>
          <NavItem><ClockIcon /></NavItem>
          <NavItem><StarIcon /></NavItem>
          <NavItem $active>
            <ActiveMark />
            <LogoIcon />
          </NavItem>
          <NavRule />
          <NavItem><FolderIcon /></NavItem>
          <NavRule />
          <NavItem><BinIcon /></NavItem>
        </Sidebar>
        <Window>
          <TitleBar>
            <Dot />
            <Dot />
            <Dot />
          </TitleBar>
          <Gallery>
            <Row>
              {topRow.map((c) => (
                <Column key={c.left} $gap={c.gap} $inset={c.inset}>
                  <Thumb>
                    <Sketch left={c.left} top={197} map={c.map} shapes={c.shapes} />
                  </Thumb>
                  <CardTitle>{c.title}</CardTitle>
                  <CardBy>By Edraw.ai</CardBy>
                </Column>
              ))}
            </Row>
            <Row>
              {bottomRow.map((c) => (
                <Column key={c.left} $gap={c.gap}>
                  <Thumb>
                    <Sketch left={c.left} top={715} map={c.map} shapes={c.shapes} />
                  </Thumb>
                </Column>
              ))}
            </Row>
          </Gallery>
          <Footer />
        </Window>
      </Frame>
    </>
  );
}
